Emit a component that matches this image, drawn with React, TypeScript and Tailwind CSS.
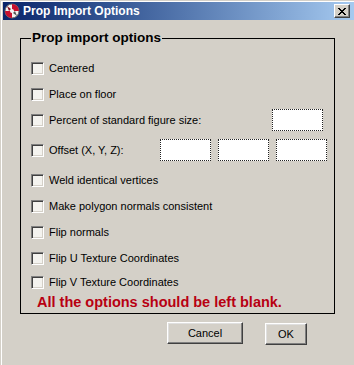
import React from "react";

const options = [
  { label: "Centered", h: "h-[26px]" },
  { label: "Place on floor", h: "h-[26px]" },
];

const lower = [
  { label: "Weld identical vertices", h: "h-[26px]" },
  { label: "Make polygon normals consistent", h: "h-[26px]" },
  { label: "Flip normals", h: "h-[26px]" },
  { label: "Flip U Texture Coordinates", h: "h-[26px]" },
  { label: "Flip V Texture Coordinates", h: "h-[22px]" },
];

function Check() {
  return (
    <span className="box-border block h-[13px] w-[13px] shrink-0 border border-t-[#808080] border-l-[#808080] border-r-white border-b-white bg-[#f4f3ef] shadow-[inset_1px_1px_0_#404040,inset_-1px_-1px_0_#d4d0c8]" />
  );
}

function Field() {
  return <span className="box-border block h-[22px] w-[51px] border border-dotted border-[#222] bg-white" />;
}

function Row({ label, h, children }: { label: string; h: string; children?: React.ReactNode }) {
  return (
    <div className={`flex items-center ${h}`}>
      <Check />
      <span className="ml-[5px] text-[11px] leading-[13px] text-black">{label}</span>
      {children}
    </div>
  );
}

function PoserIcon() {
  return (
    <svg width="16" height="16" viewBox="0 0 16 16">
      <circle cx="8" cy="8" r="7" fill="#f2f2f2" stroke="#6b6b6b" strokeWidth="1" />
      <path d="M8 1 A7 7 0 0 1 15 8 L10 8 A2 2 0 0 0 8 6 Z" fill="#c8102e" />
      <path d="M1 8 A7 7 0 0 0 8 15 L8 10 A2 2 0 0 1 6 8 Z" fill="#c8102e" />
      <path d="M3 3 L7 6 L5 8 Z" fill="#8a1020" />
      <path d="M13 13 L9 10 L11 8 Z" fill="#555" />
    </svg>
  );
}

function WinButton({ label, w }: { label: string; w: string }) {
  return (
    <button
      className={`box-border h-[22px] ${w} border border-t-white border-l-white border-r-[#404040] border-b-[#404040] bg-[#d4d0c8] text-[11px] text-black shadow-[inset_-1px_-1px_0_#808080,inset_1px_1px_0_#dfdfdf]`}
    >
      {label}
    </button>
  );
}

export default function App() {
  return (
    <div
      className="flex h-[365px] w-[354px] flex-col overflow-hidden bg-[#d4d0c8] pl-[3px] pt-[2px] shadow-[inset_1px_1px_0_#d4d0c8,inset_2px_2px_0_#fff]"
      style={{ fontFamily: '"Liberation Sans", Arial, sans-serif' }}
    >
      {/* title bar */}
      <div className="flex h-[18px] items-center bg-linear-to-r from-[#0a246a] to-[#a6caf0] pl-[1px]">
        <PoserIcon />
        <span className="ml-[3px] text-[12px] font-bold leading-[14px] text-white">Prop Import Options</span>
        <span className="ml-auto mr-[4px] box-border flex h-[14px] w-[16px] items-center justify-center border border-t-white border-l-white border-r-[#404040] border-b-[#404040] bg-[#d4d0c8] shadow-[inset_-1px_-1px_0_#808080]">
          <svg width="8" height="7" viewBox="0 0 8 7">
            <path d="M0 0h2v1h1v1h2V1h1V0h2v1H7v1H6v1H5v1h1v1h1v1h1v1H6V6H5V5H3v1H2v1H0V6h1V5h1V4h1V3H2V2H1V1H0z" fill="#000" />
          </svg>
        </span>
      </div>

      {/* body */}
      <fieldset className="ml-[17px] mt-[10px] box-border w-[315px] border border-black pb-[2px] pl-[10px]">
        <legend className="px-[1px] text-[13.5px] font-bold leading-[16px] text-black">Prop import options</legend>
        <div className="flex flex-col pt-[9px]">
          {options.map((o) => (
            <Row key={o.label} label={o.label} h={o.h} />
          ))}
          <Row label="Percent of standard figure size:" h="h-[26px]">
            <span className="ml-auto mr-[11px]">
              <Field />
            </span>
          </Row>
          <Row label="Offset (X, Y, Z):" h="h-[34px]">
            <span className="ml-auto mr-[7px] flex gap-[7px]">
              <Field />
              <Field />
              <Field />
            </span>
          </Row>
          {lower.map((o) => (
            <Row key={o.label} label={o.label} h={o.h} />
          ))}
          <p className="ml-[6px] h-[18px] text-[14.5px] font-bold leading-[18px] text-[#b80012]">
            All the options should be left blank.
          </p>
        </div>
      </fieldset>

      <div className="mt-[8px] flex items-start pl-[164px]">
        <WinButton label="Cancel" w="w-[76px]" />
        <span className="-mt-[1px] ml-[22px]">
          <WinButton label="OK" w="w-[42px]" />
        </span>
      </div>
    </div>
  );
}
